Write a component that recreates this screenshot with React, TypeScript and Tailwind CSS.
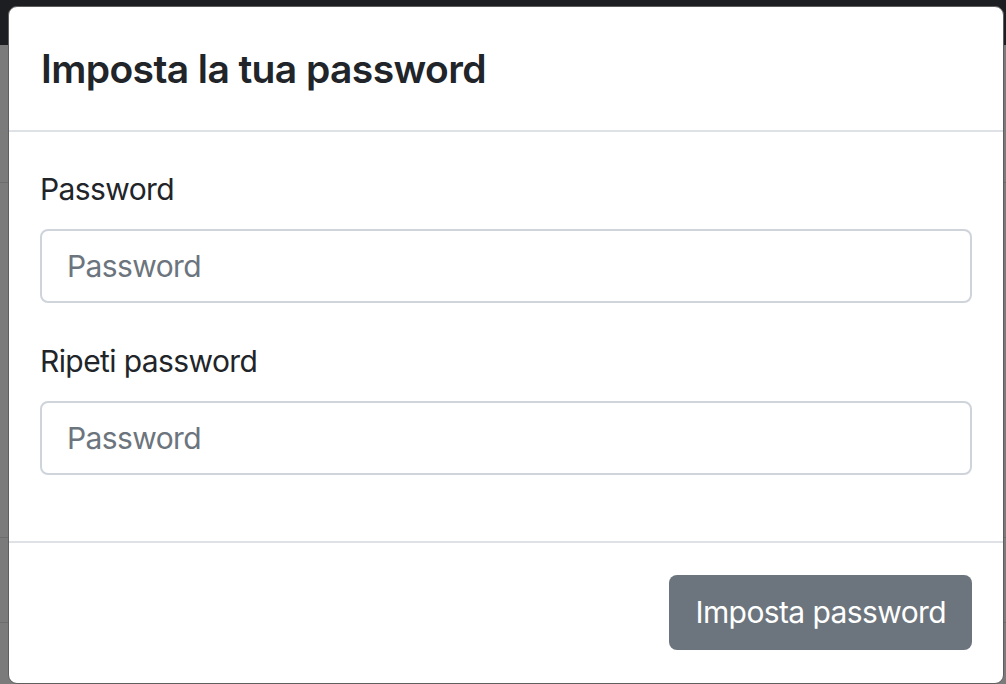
import React from "react";

const font = { fontFamily: "Inter, 'Noto Sans', sans-serif" };

function Field({ label }: { label: string }) {
  return (
    <div className="flex flex-col">
      <label className="text-[30px] leading-[46px] tracking-[-0.6px] text-[#212529]">{label}</label>
      <input
        type="password"
        placeholder="Password"
        className="mt-[17px] h-[74px] w-full rounded-[8px] border-2 border-[#ced4da] bg-white px-[25px] text-[30px] tracking-[-0.6px] text-[#495057] outline-none placeholder:text-[#6c757d]"
      />
    </div>
  );
}

export default function App() {
  return (
    <div className="relative h-[684px] w-[1006px] overflow-hidden bg-[#7b7b7b]" style={font}>
      {/* page behind the backdrop */}
      <div className="h-[45px] bg-[#1d1e21]" />
      <div className="mt-[137px] h-px bg-[#6c6c6c]" />
      <div className="mt-[354px] h-px bg-[#6c6c6c]" />
      <div className="mt-[84px] h-px bg-[#6c6c6c]" />

      <div className="absolute left-[8px] top-[6px] flex h-[678px] w-[996px] flex-col overflow-hidden rounded-[9px] border border-[#5e5e5e] bg-white">
        <div className="flex h-[125px] items-center border-b-2 border-[#dee2e6] px-[32px]">
          <h5 className="text-[39px] font-semibold leading-none tracking-[-0.6px] text-[#212529]">
            Imposta la tua password
          </h5>
        </div>

        <div className="flex flex-col gap-[35px] px-[31px] pt-[34px] pb-[66px]">
          <Field label="Password" />
          <Field label="Ripeti password" />
        </div>

        <div className="flex flex-1 items-start justify-end border-t-2 border-[#dee2e6] px-[31px] pt-[32px]">
          <button className="h-[75px] rounded-[8px] bg-[#6c757d] px-[26px] text-[30px] tracking-[-0.6px] text-white">
            Imposta password
          </button>
        </div>
      </div>
    </div>
  );
}
